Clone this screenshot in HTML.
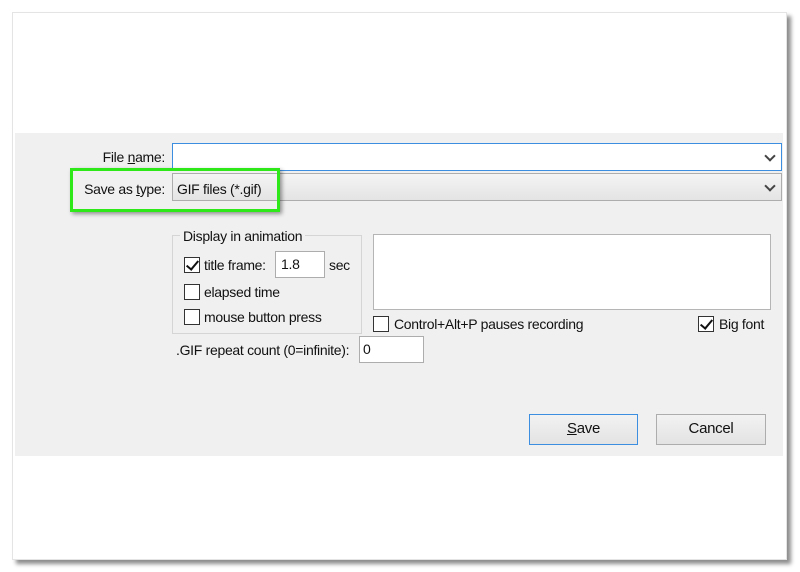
<!DOCTYPE html>
<html><head><style>
body{margin:0;width:800px;height:572px;background:#fff;position:relative;overflow:hidden;font-family:"Liberation Sans",sans-serif;font-size:14px;letter-spacing:-0.3px;color:#111}
.a{position:absolute}
.card{left:12px;top:12px;width:773px;height:546px;background:#fff;border:1px solid #e4e4e4;box-shadow:4px 4px 4px rgba(0,0,0,.45)}
.panel{left:15px;top:133px;width:768px;height:323px;background:#f0f0f0}
.inp{background:#fff;border:1px solid #adadad;box-sizing:border-box}
.cb{width:16px;height:16px;border:1px solid #333;background:#fff;box-sizing:border-box}
.chk::after{content:"";position:absolute;left:4px;top:0px;width:5px;height:10px;border:solid #111;border-width:0 2.5px 2.5px 0;transform:rotate(40deg)}
.btn{border:1px solid #adadad;background:linear-gradient(#f2f2f2,#e3e3e3);box-sizing:border-box;text-align:center;line-height:28px;font-size:15px}
.chev{width:6px;height:6px;border:solid #444;border-width:0 2px 2px 0;transform:rotate(45deg)}
.lbl{width:165px;left:0;text-align:right}
</style></head><body>
<div class="a card"></div>
<div class="a panel"></div>
<div class="a lbl" style="top:149px">File <u>n</u>ame:</div>
<div class="a inp" style="left:172px;top:143px;width:610px;height:28px;border-color:#3c8ee0"></div>
<div class="a chev" style="left:766px;top:152px"></div>
<div class="a" style="left:172px;top:173px;width:610px;height:28px;border:1px solid #adadad;box-sizing:border-box;background:linear-gradient(#f4f4f4,#e4e4e4)"></div>
<div class="a chev" style="left:766px;top:182px"></div>
<div class="a lbl" style="top:181px">Save as <u>t</u>ype:</div>
<div class="a" style="left:177px;top:181px">GIF files (*.gif)</div>
<div class="a" style="left:70px;top:168px;width:204px;height:38px;border:3px solid #2fe81a;box-shadow:2px 2px 4px rgba(0,0,0,.4)"></div>
<div class="a" style="left:172px;top:235px;width:188px;height:97px;border:1px solid #d5d5d5"></div>
<div class="a" style="left:180px;top:228px;background:#f0f0f0;padding:0 3px">Display in animation</div>
<div class="a cb chk" style="left:184px;top:257px"></div>
<div class="a" style="left:204px;top:257px">title frame:</div>
<div class="a inp" style="left:275px;top:251px;width:50px;height:27px;padding:4px 5px">1.8</div>
<div class="a" style="left:329px;top:257px">sec</div>
<div class="a cb" style="left:184px;top:284px"></div>
<div class="a" style="left:204px;top:284px">elapsed time</div>
<div class="a cb" style="left:184px;top:309px"></div>
<div class="a" style="left:204px;top:309px">mouse button press</div>
<div class="a" style="left:176px;top:342px">.GIF repeat count (0=infinite):</div>
<div class="a inp" style="left:359px;top:336px;width:65px;height:27px;padding:4px 3px">0</div>
<div class="a inp" style="left:373px;top:234px;width:398px;height:76px;border-color:#b5b5b5"></div>
<div class="a cb" style="left:373px;top:316px"></div>
<div class="a" style="left:394px;top:316px">Control+Alt+P pauses recording</div>
<div class="a cb chk" style="left:698px;top:316px"></div>
<div class="a" style="left:719px;top:316px">Big font</div>
<div class="a btn" style="left:529px;top:414px;width:109px;height:31px;border-color:#3c8ee0"><u>S</u>ave</div>
<div class="a btn" style="left:656px;top:414px;width:110px;height:31px">Cancel</div>
</body></html>
